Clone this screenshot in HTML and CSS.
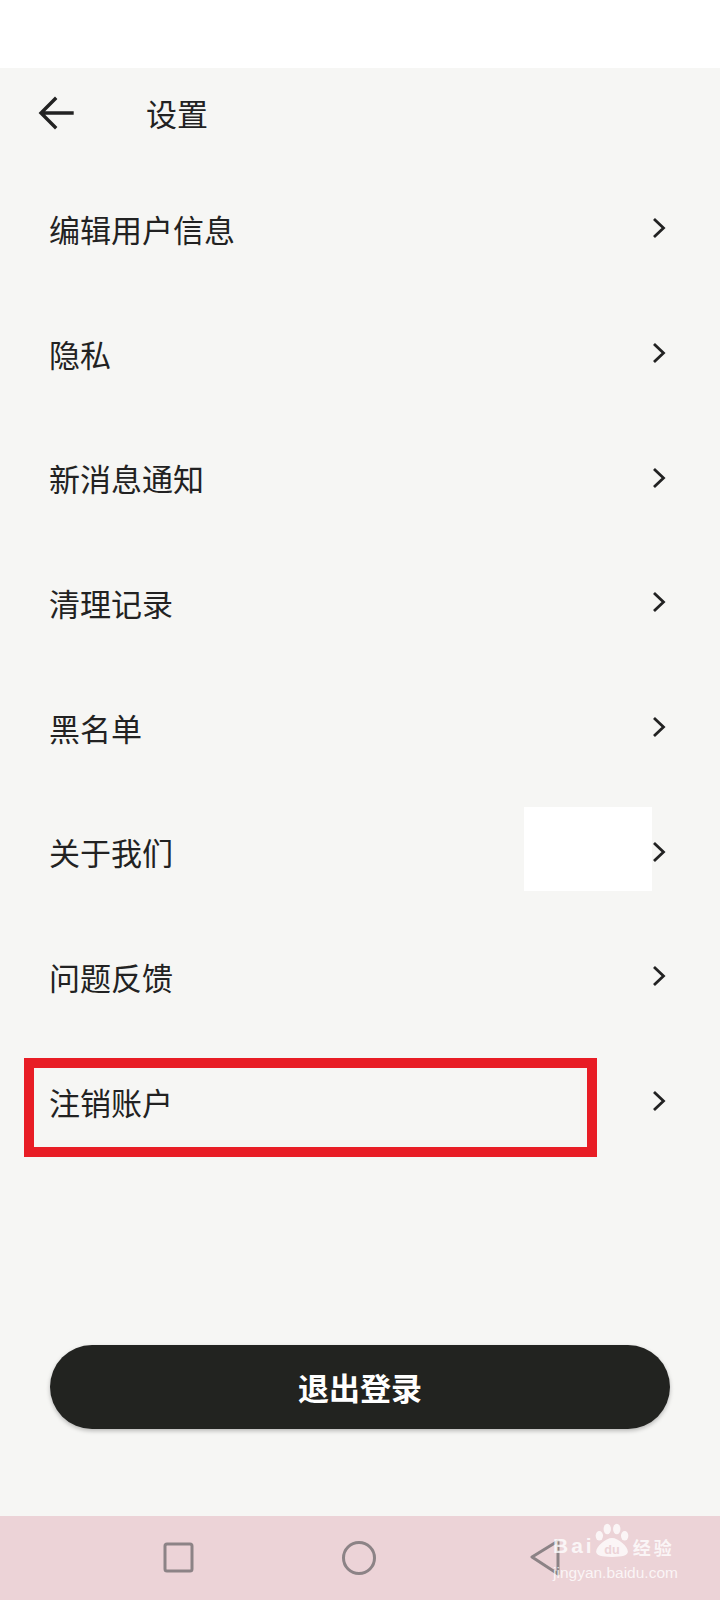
FILE: index.html
```html
<!DOCTYPE html>
<html lang="zh-CN">
<head>
  <meta charset="UTF-8">
  <title>设置</title>
  <link rel="stylesheet" href="styles.css">
</head>
<body>
  <div class="phone">
    <div class="status-bar"></div>

    <div class="page">
      <div class="header">
        <svg class="back" width="36" height="34" viewBox="0 0 36 34">
          <path d="M34 17H4M17 3L3 17l14 14" fill="none" stroke="#222" stroke-width="3.4" stroke-linecap="square"/>
        </svg>
        <h1>设置</h1>
      </div>

      <ul class="menu">
        <li>编辑用户信息<svg class="chev" width="14" height="22" viewBox="0 0 14 22"><path d="M2 2l9.5 9L2 20"/></svg></li>
        <li>隐私<svg class="chev" width="14" height="22" viewBox="0 0 14 22"><path d="M2 2l9.5 9L2 20"/></svg></li>
        <li>新消息通知<svg class="chev" width="14" height="22" viewBox="0 0 14 22"><path d="M2 2l9.5 9L2 20"/></svg></li>
        <li>清理记录<svg class="chev" width="14" height="22" viewBox="0 0 14 22"><path d="M2 2l9.5 9L2 20"/></svg></li>
        <li>黑名单<svg class="chev" width="14" height="22" viewBox="0 0 14 22"><path d="M2 2l9.5 9L2 20"/></svg></li>
        <li>关于我们<svg class="chev" width="14" height="22" viewBox="0 0 14 22"><path d="M2 2l9.5 9L2 20"/></svg><span class="blank"></span></li>
        <li>问题反馈<svg class="chev" width="14" height="22" viewBox="0 0 14 22"><path d="M2 2l9.5 9L2 20"/></svg></li>
        <li>注销账户<svg class="chev" width="14" height="22" viewBox="0 0 14 22"><path d="M2 2l9.5 9L2 20"/></svg><span class="mark"></span></li>
      </ul>

      <button class="logout">退出登录</button>
    </div>

    <div class="nav-bar">
      <svg width="32" height="32" viewBox="0 0 32 32">
        <rect x="2" y="2" width="27" height="27" rx="2" fill="none" stroke="#8c8386" stroke-width="3"/>
      </svg>
      <svg width="36" height="36" viewBox="0 0 36 36">
        <circle cx="18" cy="18" r="15.5" fill="none" stroke="#8c8386" stroke-width="3"/>
      </svg>
      <svg class="nav-back" width="32" height="38" viewBox="0 0 32 38">
        <path d="M28 2L2 18l26 17z" fill="none" stroke="#8c8386" stroke-width="3" stroke-linejoin="round"/>
      </svg>

      <div class="watermark">
        <div class="wm-top">
          <span class="wm-bai">Bai</span>
          <svg class="paw" width="38" height="34" viewBox="0 0 36 32">
            <ellipse cx="6" cy="12" rx="3.5" ry="4.5" fill="currentColor"/>
            <ellipse cx="13.5" cy="5.5" rx="3.5" ry="5" fill="currentColor"/>
            <ellipse cx="22.5" cy="5.5" rx="3.5" ry="5" fill="currentColor"/>
            <ellipse cx="30" cy="12" rx="3.5" ry="4.5" fill="currentColor"/>
            <path d="M18 14c-6 0-15 8-15 13 0 4 5 5 15 5s15-1 15-5c0-5-9-13-15-13z" fill="currentColor"/>
            <text x="18" y="29" text-anchor="middle" font-size="12" font-weight="bold" fill="#ecd3d7" font-family="Liberation Sans, sans-serif">du</text>
          </svg>
          <span class="wm-jy">经验</span>
        </div>
        <div class="wm-url">jingyan.baidu.com</div>
      </div>
    </div>
  </div>
</body>
</html>
```

FILE: styles.css
```css
body {
  margin: 0;
  font-family: "Noto Sans CJK SC", "Noto Sans", sans-serif;
  color: #222;
}
.phone {
  width: 720px;
  height: 1600px;
  display: flex;
  flex-direction: column;
  background: #f6f6f4;
}
.status-bar {
  height: 68px;
  background: #fff;
}
.page {
  flex: 1;
  display: flex;
  flex-direction: column;
}
.header {
  height: 88px;
  display: flex;
  align-items: center;
  padding-left: 38px;
}
.back {
  margin-top: 2px;
}
.header h1 {
  margin: 0 0 0 72px;
  font-size: 31px;
  font-weight: normal;
  line-height: 1;
}
.menu {
  list-style: none;
  margin: 10px 0 0;
  padding: 0;
}
.menu li {
  position: relative;
  height: 124.7px;
  display: flex;
  align-items: center;
  justify-content: space-between;
  padding: 0 54px 0 49px;
  font-size: 31px;
  line-height: 1;
}
.chev {
  fill: none;
  stroke: #222;
  stroke-width: 2.8;
}
.blank {
  position: absolute;
  left: 524px;
  top: 18px;
  width: 128px;
  height: 84px;
  background: #fff;
}
.mark {
  position: absolute;
  left: 24px;
  top: 19px;
  width: 553px;
  height: 79px;
  border: 10px solid #e81d25;
}
.logout {
  margin: 181px 50px 0 50px;
  height: 84px;
  border: none;
  border-radius: 42px;
  background: #222320;
  color: #fff;
  font-family: "Noto Sans CJK SC", sans-serif;
  font-size: 31px;
  font-weight: bold;
  box-shadow: 0 2px 4px rgba(0,0,0,0.25);
}
.nav-bar {
  position: relative;
  height: 84px;
  background: #ecd3d7;
  display: flex;
  align-items: center;
  padding-left: 163px;
  gap: 146px;
}
.nav-back {
  margin-left: 7px;
}
.watermark {
  position: absolute;
  left: 553px;
  top: 6px;
  color: rgba(255,255,255,0.78);
}
.wm-top {
  display: flex;
  align-items: flex-end;
  height: 35px;
}
.wm-bai {
  font-family: "Liberation Sans", sans-serif;
  font-weight: bold;
  font-size: 21px;
  letter-spacing: 3px;
  line-height: 1;
  margin-bottom: 1px;
}
.paw {
  margin-left: -2px;
}
.wm-jy {
  display: inline-block;
  font-size: 18px;
  font-weight: bold;
  line-height: 1;
  letter-spacing: 3px;
  margin: 0 0 1px 2px;
}
.wm-url {
  font-family: "Liberation Sans", sans-serif;
  font-size: 15.5px;
  margin-top: 7px;
}
```
